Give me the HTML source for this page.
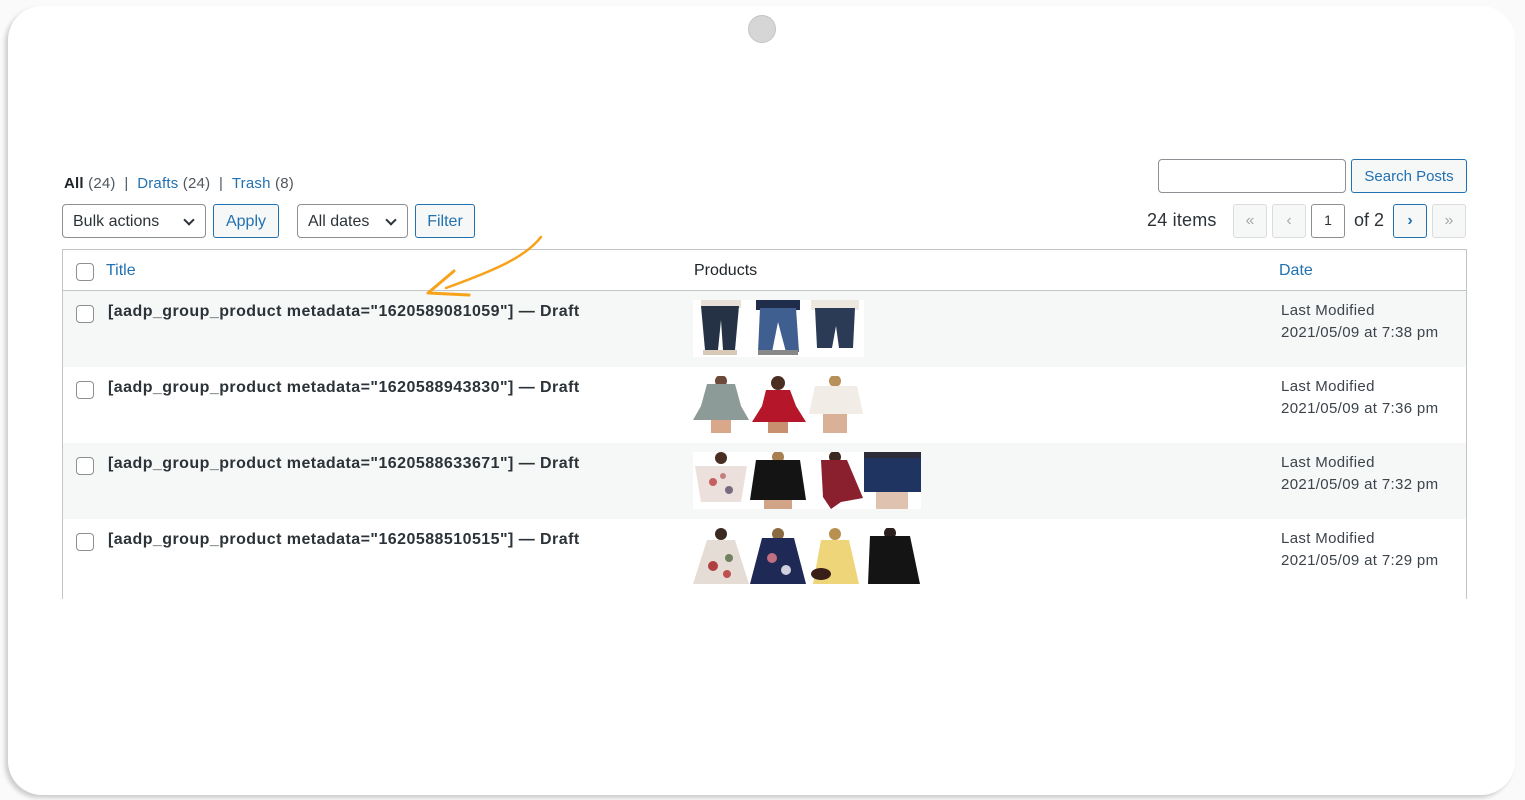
<!DOCTYPE html>
<html><head><meta charset="utf-8"><style>
*{box-sizing:border-box;margin:0;padding:0}
body{width:1525px;height:800px;background:#fafafa;font-family:"Liberation Sans",sans-serif;position:relative;overflow:hidden;color:#1d2327}
.card{position:absolute;left:8px;top:6px;width:1507px;height:789px;background:#fff;border-radius:34px;box-shadow:-3px 3px 4px rgba(0,0,0,.18)}
.dot{position:absolute;left:748px;top:15px;width:28px;height:28px;border-radius:50%;background:#d6d6d6;border:1px solid #c4c4c4}
.abs{position:absolute}
a{color:#2271b1;text-decoration:none}
.sub{left:64px;top:175px;font-size:15px;color:#50575e;letter-spacing:.2px}
.sub b{color:#1d2327}
.sel{border:1px solid #8c8f94;border-radius:4px;height:34px;font-size:16px;padding:0 10px;line-height:33px;color:#2c3338;background:#fff}
.btn{border:1px solid #2271b1;border-radius:3px;height:34px;font-size:16px;line-height:33px;color:#2271b1;background:#f6f7f7;text-align:center}
.chev{position:absolute;right:12px;top:11px;width:8px;height:8px;border-right:2px solid #2c3338;border-bottom:2px solid #2c3338;transform:rotate(45deg)}
.pg{border:1px solid #dcdcde;border-radius:3px;background:#f6f7f7;color:#a7aaad;width:34px;height:34px;text-align:center;line-height:31px;font-size:16px}
.table{left:62px;top:249px;width:1405px;height:350px;border:1px solid #c3c4c7;border-bottom:none}
.th{position:absolute;left:0;top:0;width:100%;height:41px;border-bottom:1px solid #c3c4c7;background:#fff}
.row{position:absolute;left:0;width:100%;height:76px}
.cb{position:absolute;width:18px;height:18px;border:1px solid #8c8f94;border-radius:4px;background:#fff}
.t{position:absolute;left:45px;font-size:16px;font-weight:bold;color:#2c3338;letter-spacing:.45px}
.d{position:absolute;left:1218px;font-size:15px;color:#3c434a;line-height:22px;letter-spacing:.35px}
.imgs{position:absolute;left:630px;display:flex}
.imgs svg{width:57px;height:57px;display:block;background:#fff}
</style></head><body>
<div class="card"></div>
<div class="dot"></div>

<div class="abs sub"><b>All</b> (24) &nbsp;| &nbsp;<a>Drafts</a> (24) &nbsp;| &nbsp;<a>Trash</a> (8)</div>

<div class="abs sel" style="left:62px;top:204px;width:144px">Bulk actions<span class="chev"></span></div>
<div class="abs btn" style="left:213px;top:204px;width:66px">Apply</div>
<div class="abs sel" style="left:297px;top:204px;width:111px">All dates<span class="chev"></span></div>
<div class="abs btn" style="left:415px;top:204px;width:60px">Filter</div>

<div class="abs" style="left:1158px;top:159px;width:188px;height:34px;border:1px solid #8c8f94;border-radius:4px;background:#fff"></div>
<div class="abs btn" style="left:1351px;top:159px;width:116px;font-size:15px">Search Posts</div>

<div class="abs" style="left:1147px;top:210px;font-size:18px;color:#2c3338;letter-spacing:.2px">24 items</div>
<div class="abs pg" style="left:1233px;top:204px">«</div>
<div class="abs pg" style="left:1272px;top:204px">‹</div>
<div class="abs pg" style="left:1311px;top:204px;background:#fff;border-color:#8c8f94;color:#2c3338;font-size:14px">1</div>
<div class="abs" style="left:1354px;top:210px;font-size:18px;color:#2c3338">of 2</div>
<div class="abs pg" style="left:1393px;top:204px;border-color:#2271b1;color:#2271b1;font-weight:bold">›</div>
<div class="abs pg" style="left:1432px;top:204px">»</div>

<div class="abs table">
 <div class="th">
  <span class="cb" style="left:13px;top:13px"></span>
  <a class="abs" style="left:43px;top:12px;font-size:16px">Title</a>
  <span class="abs" style="left:631px;top:12px;font-size:16px;color:#1d2327">Products</span>
  <a class="abs" style="left:1216px;top:12px;font-size:16px">Date</a>
 </div>
 <div class="row" style="top:41px;background:#f6f7f7">
  <span class="cb" style="left:13px;top:14px"></span>
  <span class="t" style="top:12px">[aadp_group_product metadata="1620589081059"] — Draft</span>
  <div class="imgs" style="top:9px">
   <svg viewBox="0 0 57 57"><rect x="8" y="0" width="40" height="8" fill="#e8e0d8"/><path d="M8 6h38l-4 44h-12l-2-30-3 30H12z" fill="#253245"/><rect x="10" y="50" width="34" height="5" fill="#d8c8b8"/></svg>
   <svg viewBox="0 0 57 57"><rect x="6" y="0" width="44" height="10" fill="#1f2c4a"/><path d="M10 8h36l3 44H36l-8-30-6 30H8z" fill="#3e5f8f"/><rect x="8" y="50" width="40" height="5" fill="#888"/></svg>
   <svg viewBox="0 0 57 57"><rect x="4" y="0" width="48" height="10" fill="#ece8e0"/><path d="M8 8h40l-2 40H32l-3-22-4 22H10z" fill="#2b3b55"/></svg>
  </div>
  <div class="d" style="top:9px">Last Modified<br>2021/05/09 at 7:38 pm</div>
 </div>
 <div class="row" style="top:117px;background:#fff">
  <span class="cb" style="left:13px;top:14px"></span>
  <span class="t" style="top:12px">[aadp_group_product metadata="1620588943830"] — Draft</span>
  <div class="imgs" style="top:9px">
   <svg viewBox="0 0 57 57"><circle cx="28" cy="5" r="6" fill="#6b4a3a"/><path d="M14 8h28l6 22 8 14H0l8-14z" fill="#8c9a98"/><rect x="18" y="44" width="20" height="13" fill="#d9a88a"/></svg>
   <svg viewBox="0 0 57 57"><circle cx="28" cy="7" r="7" fill="#4a2e22"/><path d="M16 14h24l6 16 10 16H2l10-16z" fill="#b5162a"/><rect x="18" y="46" width="20" height="11" fill="#c8906f"/></svg>
   <svg viewBox="0 0 57 57"><circle cx="28" cy="5" r="6" fill="#b7905a"/><path d="M8 10h42l6 28H2z" fill="#f1ede6"/><rect x="16" y="38" width="24" height="19" fill="#d9b196"/></svg>
  </div>
  <div class="d" style="top:9px">Last Modified<br>2021/05/09 at 7:36 pm</div>
 </div>
 <div class="row" style="top:193px;background:#f6f7f7">
  <span class="cb" style="left:13px;top:14px"></span>
  <span class="t" style="top:12px">[aadp_group_product metadata="1620588633671"] — Draft</span>
  <div class="imgs" style="top:9px">
   <svg viewBox="0 0 57 57"><circle cx="28" cy="6" r="6" fill="#4a2e22"/><path d="M2 14h52l-6 36H8z" fill="#ece0dc"/><circle cx="20" cy="30" r="4" fill="#c46060"/><circle cx="36" cy="38" r="4" fill="#7a6a80"/><circle cx="30" cy="24" r="3" fill="#c48080"/></svg>
   <svg viewBox="0 0 57 57"><circle cx="28" cy="5" r="6" fill="#a88050"/><path d="M6 8h44l6 40H0z" fill="#141414"/><rect x="14" y="48" width="28" height="9" fill="#d1a488"/></svg>
   <svg viewBox="0 0 57 57"><circle cx="28" cy="5" r="6" fill="#3a2a20"/><path d="M14 8h26l16 38-22 4-10 7-8-12z" fill="#8a1f2e"/></svg>
   <svg viewBox="0 0 57 57"><rect x="0" y="0" width="57" height="8" fill="#2b2b3a"/><path d="M0 6h57v34H0z" fill="#1f3460"/><rect x="12" y="40" width="32" height="17" fill="#e0c2b0"/></svg>
  </div>
  <div class="d" style="top:9px">Last Modified<br>2021/05/09 at 7:32 pm</div>
 </div>
 <div class="row" style="top:269px;background:#fff">
  <span class="cb" style="left:13px;top:14px"></span>
  <span class="t" style="top:12px">[aadp_group_product metadata="1620588510515"] — Draft</span>
  <div class="imgs" style="top:9px">
   <svg viewBox="0 0 57 57"><circle cx="28" cy="6" r="6" fill="#3a2a20"/><path d="M14 12h28l14 44H0z" fill="#e6dcd6"/><circle cx="20" cy="38" r="5" fill="#b04040"/><circle cx="36" cy="30" r="4" fill="#708060"/><circle cx="34" cy="46" r="4" fill="#c05050"/></svg>
   <svg viewBox="0 0 57 57"><circle cx="28" cy="6" r="6" fill="#8a6a40"/><path d="M12 10h32l12 46H0z" fill="#1e2a55"/><circle cx="22" cy="30" r="5" fill="#c07080"/><circle cx="36" cy="42" r="5" fill="#d0d0e0"/></svg>
   <svg viewBox="0 0 57 57"><circle cx="28" cy="6" r="6" fill="#b89050"/><path d="M14 12h28l10 44H6z" fill="#efd57a"/><ellipse cx="14" cy="46" rx="10" ry="6" fill="#3a1e18"/></svg>
   <svg viewBox="0 0 57 57"><circle cx="26" cy="5" r="6" fill="#2a2020"/><path d="M6 8h40l10 48H4z" fill="#141414"/></svg>
  </div>
  <div class="d" style="top:9px">Last Modified<br>2021/05/09 at 7:29 pm</div>
 </div>
</div>

<svg class="abs" style="left:0;top:0" width="1525" height="800">
 <path d="M541 237 C525 258 490 272 446 288" stroke="#f6a21b" stroke-width="2.5" fill="none" stroke-linecap="round"/>
 <path d="M454 271 L428 293 L469 295" stroke="#f6a21b" stroke-width="3" fill="none" stroke-linecap="round" stroke-linejoin="round"/>
</svg>
</body></html>
